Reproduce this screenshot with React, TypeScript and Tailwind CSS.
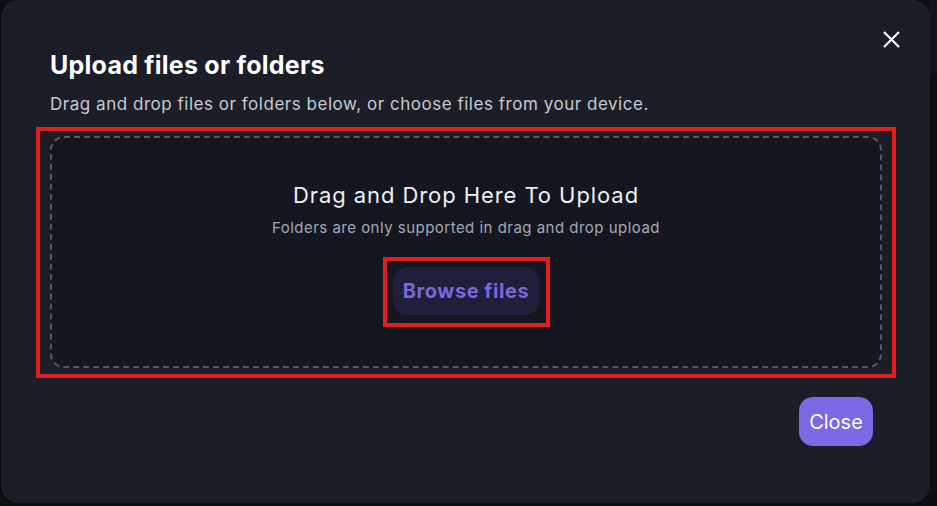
import { ReactNode } from "react";

function Annotation({ className }: { className: string }) {
  return <span className={`pointer-events-none absolute border-4 border-[#e21d1f] ${className}`} />;
}

function CloseIcon() {
  return (
    <svg width="17" height="17" viewBox="0 0 17 17" fill="none" stroke="currentColor" strokeWidth="2.2">
      <path d="M1 1 16 16" />
      <path d="M16 1 1 16" />
    </svg>
  );
}

function Dialog({ children }: { children: ReactNode }) {
  return (
    <div className="relative ml-px flex h-[503px] w-[929px] flex-col rounded-[18px] bg-[#1b1e26] px-[49px] pt-[50px]">
      <button
        type="button"
        aria-label="Close dialog"
        className="absolute right-[30px] top-[31px] text-white"
      >
        <CloseIcon />
      </button>
      {children}
    </div>
  );
}

export default function App() {
  return (
    <div className="relative h-[506px] w-[937px] overflow-hidden bg-[#0c0e13] font-['Inter',sans-serif]">
      <div className="absolute right-0 top-0 h-[73px] w-[8px] bg-[#15141d]" />
      <Dialog>
        <h2 className="text-[25px] font-bold leading-[30px] tracking-[0.01em] text-white">
          Upload files or folders
        </h2>
        <p className="mt-[12px] text-[17px] leading-[24px] tracking-[0.031em] text-[#c6cad3]">
          Drag and drop files or folders below, or choose files from your device.
        </p>

        <div className="relative mt-[20px] flex h-[232px] w-[832px] flex-col items-center rounded-[14px] border-2 border-dashed border-[#4f5869] bg-[#141720] pt-[43px]">
          <Annotation className="-bottom-[12px] -left-[16px] -right-[16px] -top-[11px]" />
          <h3 className="text-[22px] leading-[28px] tracking-[0.042em] text-[#eef0f4]">
            Drag and Drop Here To Upload
          </h3>
          <p className="mt-[9px] text-[15px] leading-[20px] tracking-[0.032em] text-[#a3a8b3]">
            Folders are only supported in drag and drop upload
          </p>
          <div className="relative mt-[29px]">
            <button
              type="button"
              className="flex h-[48px] w-[146px] items-center justify-center rounded-[14px] bg-[#1f1e3b] text-[20px] font-bold tracking-[0.027em] text-[#7a67dc]"
            >
              Browse files
            </button>
            <Annotation className="-bottom-[12px] -left-[10px] -right-[11px] -top-[10px]" />
          </div>
        </div>

        <div className="mt-[29px] flex w-[823px] justify-end">
          <button
            type="button"
            className="flex h-[49px] w-[74px] items-center justify-center rounded-[14px] bg-[#7a68e4] text-[20px] text-white"
          >
            Close
          </button>
        </div>
      </Dialog>
    </div>
  );
}
